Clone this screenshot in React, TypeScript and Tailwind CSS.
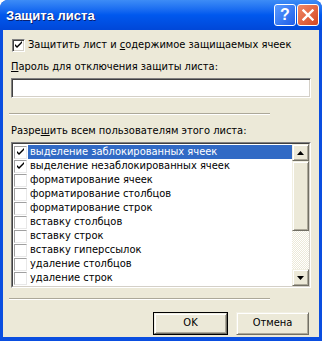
import { Fragment } from "react";

const items = [
  { label: "выделение заблокированных ячеек", checked: true, selected: true },
  { label: "выделение незаблокированных ячеек", checked: true },
  { label: "форматирование ячеек" },
  { label: "форматирование столбцов" },
  { label: "форматирование строк" },
  { label: "вставку столбцов" },
  { label: "вставку строк" },
  { label: "вставку гиперссылок" },
  { label: "удаление столбцов" },
  { label: "удаление строк" },
];

const Check = () => (
  <svg width="9" height="9" viewBox="0 0 9 9" className="block">
    <path d="M1 3 L3 5 L8 0 L8 2 L3 7 L1 5 Z" fill="#000" />
  </svg>
);

const Sunken = ({ checked, light }: { checked?: boolean; light?: boolean }) => (
  <div
    className={
      light
        ? "w-[13px] h-[13px] shrink-0 bg-white border border-t-[#a0a0a0] border-l-[#a0a0a0] border-r-[#e8e8e8] border-b-[#e8e8e8] flex items-center justify-center"
        : "w-[13px] h-[13px] shrink-0 bg-white border border-t-[#808080] border-l-[#808080] border-r-white border-b-white shadow-[inset_1px_1px_0_#404040,inset_-1px_-1px_0_#d4d0c8] flex items-center justify-center"
    }
  >
    {checked && <Check />}
  </div>
);

const Separator = () => (
  <div className="ml-[6px] w-[261px] h-[2px] border-t border-t-[#aca899] border-b border-b-white" />
);

const Arrow = ({ up }: { up?: boolean }) => (
  <svg width="7" height="4" viewBox="0 0 7 4" className="block">
    <path d={up ? "M3.5 0 L7 4 L0 4 Z" : "M0 0 L7 0 L3.5 4 Z"} fill="#000" />
  </svg>
);

const Raised = ({ children, className }: { children?: React.ReactNode; className?: string }) => (
  <div
    className={
      "bg-[#ece9d8] border border-t-[#f1efe2] border-l-[#f1efe2] border-r-[#716f64] border-b-[#716f64] shadow-[inset_1px_1px_0_#ffffff,inset_-1px_-1px_0_#aca899] flex items-center justify-center " +
      (className ?? "")
    }
  >
    {children}
  </div>
);

export default function App() {
  return (
    <div
      className="w-[322px] h-[341px] flex flex-col rounded-t-[8px] overflow-hidden bg-[#0a4ee0] text-[11px] text-black"
      style={{ fontFamily: '"DejaVu Sans Condensed", "DejaVu Sans", sans-serif' }}
    >
      {/* title bar */}
      <div className="h-[30px] shrink-0 flex items-center pl-[6px] pr-[3px] bg-gradient-to-b from-[#3d8cf6] via-[#0058ee] to-[#0047d8]">
        <span
          className="flex-1 text-white font-bold text-[13px] pt-[1px] [text-shadow:1px_1px_0_#0a1e6e]"
          style={{ fontFamily: '"Liberation Sans", sans-serif' }}
        >
          Защита листа
        </span>
        <div className="flex gap-[1px]">
          <div className="w-[22px] h-[22px] rounded-[3px] border border-white bg-gradient-to-br from-[#5a9bff] to-[#1f5ce8] flex items-center justify-center text-white font-bold text-[16px]" style={{ fontFamily: '"Liberation Sans", sans-serif' }}>
            ?
          </div>
          <div className="w-[22px] h-[22px] rounded-[3px] border border-white bg-gradient-to-br from-[#f08866] to-[#d3451e] flex items-center justify-center">
            <svg width="12" height="12" viewBox="0 0 12 12">
              <path d="M1.5 1.5 L10.5 10.5 M10.5 1.5 L1.5 10.5" stroke="#fff" strokeWidth="2.4" strokeLinecap="square" />
            </svg>
          </div>
        </div>
      </div>

      {/* body */}
      <div className="flex-1 mx-[3px] mb-[4px] bg-[#ece9d8] flex flex-col">
        <label className="flex items-center gap-[3px] mt-[9px] ml-[9px] h-[13px]">
          <Sunken checked />
          <span>
            Защитить лист и <u>с</u>одержимое защищаемых ячеек
          </span>
        </label>

        <div className="mt-[8px] ml-[8px] h-[13px] leading-[13px]">
          <u>П</u>ароль для отключения защиты листа:
        </div>
        <div className="mt-[5px] ml-[8px] w-[300px] h-[20px] bg-white border border-t-[#808080] border-l-[#808080] border-r-white border-b-white shadow-[inset_1px_1px_0_#404040,inset_-1px_-1px_0_#d4d0c8]" />

        <div className="mt-[15px]">
          <Separator />
        </div>

        <div className="mt-[9px] ml-[8px] h-[13px] leading-[13px]">
          Разре<u>ш</u>ить всем пользователям этого листа:
        </div>

        <div className="mt-[5px] ml-[8px] w-[300px] h-[146px] bg-white border border-t-[#808080] border-l-[#808080] border-r-white border-b-white flex">
          <div className="flex-1 flex border-t border-l border-t-[#404040] border-l-[#404040] border-r border-b border-r-[#d4d0c8] border-b-[#d4d0c8]">
            <div className="flex-1 overflow-hidden pt-[1px]">
              {items.map((it) => (
                <Fragment key={it.label}>
                  <div className="h-[14px] flex items-center pl-[1px]">
                    <Sunken checked={it.checked} light />
                    <span
                      className={
                        "flex-1 h-[14px] leading-[14px] pl-[2px] ml-[1px] whitespace-nowrap " +
                        (it.selected ? "bg-[#316ac5] text-white" : "")
                      }
                    >
                      {it.label}
                    </span>
                  </div>
                </Fragment>
              ))}
            </div>
            <div className="w-[17px] flex flex-col">
              <Raised className="h-[17px] shrink-0">
                <Arrow up />
              </Raised>
              <Raised className="h-[70px] shrink-0" />
              <div className="flex-1 bg-[repeating-conic-gradient(#ffffff_0_25%,#ece9d8_0_50%)] bg-[length:2px_2px]" />
              <Raised className="h-[17px] shrink-0">
                <Arrow />
              </Raised>
            </div>
          </div>
        </div>

        <div className="mt-[10px]">
          <Separator />
        </div>

        <div className="mt-[12px] ml-[150px] flex gap-[8px]">
          <div className="w-[75px] h-[23px] border border-black">
            <Raised className="w-full h-full">OK</Raised>
          </div>
          <Raised className="w-[73px] h-[23px]">Отмена</Raised>
        </div>
      </div>
    </div>
  );
}
